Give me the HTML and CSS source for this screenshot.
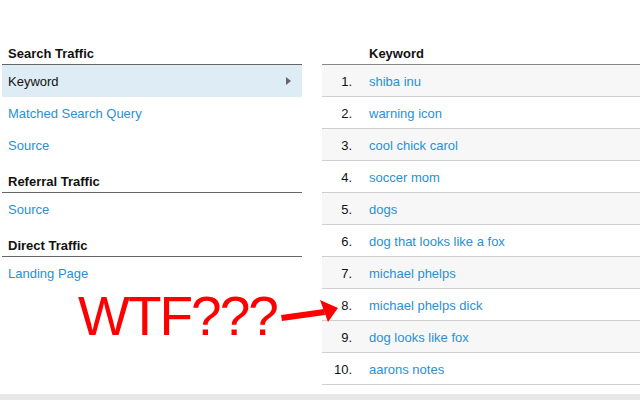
FILE: index.html
```html
<!DOCTYPE html>
<html>
<head>
<meta charset="utf-8">
<link rel="stylesheet" href="styles.css">
</head>
<body>
<div class="main">
  <div class="nav">
    <div class="nav-head">Search Traffic</div>
    <div class="nav-item active">Keyword<span class="tri"></span></div>
    <div class="nav-item">Matched Search Query</div>
    <div class="nav-item">Source</div>
    <div class="nav-head">Referral Traffic</div>
    <div class="nav-item">Source</div>
    <div class="nav-head">Direct Traffic</div>
    <div class="nav-item">Landing Page</div>
  </div>
  <div class="table">
    <div class="thead"><span></span><span>Keyword</span></div>
    <div class="row odd"><span class="num">1.</span><span class="kw">shiba inu</span></div>
    <div class="row"><span class="num">2.</span><span class="kw">warning icon</span></div>
    <div class="row odd"><span class="num">3.</span><span class="kw">cool chick carol</span></div>
    <div class="row"><span class="num">4.</span><span class="kw">soccer mom</span></div>
    <div class="row odd"><span class="num">5.</span><span class="kw">dogs</span></div>
    <div class="row"><span class="num">6.</span><span class="kw">dog that looks like a fox</span></div>
    <div class="row odd"><span class="num">7.</span><span class="kw">michael phelps</span></div>
    <div class="row"><span class="num">8.</span><span class="kw">michael phelps dick</span></div>
    <div class="row odd"><span class="num">9.</span><span class="kw">dog looks like fox</span></div>
    <div class="row"><span class="num">10.</span><span class="kw">aarons notes</span></div>
  </div>
</div>
<div class="band"></div>
<div class="wtf">WTF???</div>
<svg class="arrow" width="70" height="40" viewBox="0 0 70 40">
  <polygon points="0,17 1,23 44,17 43,11" fill="#ff0000"/>
  <polygon points="39,2 57,10 47,24" fill="#ff0000"/>
</svg>
</body>
</html>
```
FILE: styles.css
```css
html, body {
  margin: 0;
  padding: 0;
  background: #fff;
}
body {
  font-family: "Liberation Sans", Arial, sans-serif;
  font-size: 13px;
  color: #111;
  position: relative;
  width: 640px;
  height: 400px;
  overflow: hidden;
}
.main {
  display: flex;
  gap: 20px;
  padding-top: 33px;
  padding-left: 2px;
  height: 361px;
  box-sizing: border-box;
}
.nav {
  width: 300px;
  display: flex;
  flex-direction: column;
}
.nav-head {
  font-weight: bold;
  line-height: 18px;
  padding: 12px 6px 1px;
  border-bottom: 1px solid #666;
}
.nav-item {
  line-height: 34px;
  height: 32px;
  padding: 0 6px;
  color: #2b8fd3;
  position: relative;
}
.nav-item.active {
  background: #deedf5;
  color: #111;
}
.tri {
  position: absolute;
  right: 11px;
  top: 12px;
  width: 0;
  height: 0;
  border-top: 4px solid transparent;
  border-bottom: 4px solid transparent;
  border-left: 5px solid #666;
}
.table {
  flex: 1;
  display: flex;
  flex-direction: column;
}
.thead, .row {
  display: grid;
  grid-template-columns: 30px 1fr;
  column-gap: 17px;
}
.thead {
  font-weight: bold;
  line-height: 18px;
  padding-top: 12px;
  padding-bottom: 1px;
  border-bottom: 1px solid #888;
}
.row {
  height: 31px;
  line-height: 33px;
  border-bottom: 1px solid #cfcfcf;
}
.row.odd {
  background: #f7f7f7;
}
.num {
  text-align: right;
  color: #111;
}
.kw {
  color: #2b8fd3;
}
.band {
  height: 6px;
  margin-top: 33px;
  background: #e8e8e8;
}
.wtf {
  position: absolute;
  left: 78px;
  top: 284px;
  font-family: "Liberation Sans", Arial, sans-serif;
  font-size: 55px;
  line-height: 64px;
  letter-spacing: -2px;
  color: #ff0000;
}
.arrow {
  position: absolute;
  left: 281px;
  top: 298px;
}
```
